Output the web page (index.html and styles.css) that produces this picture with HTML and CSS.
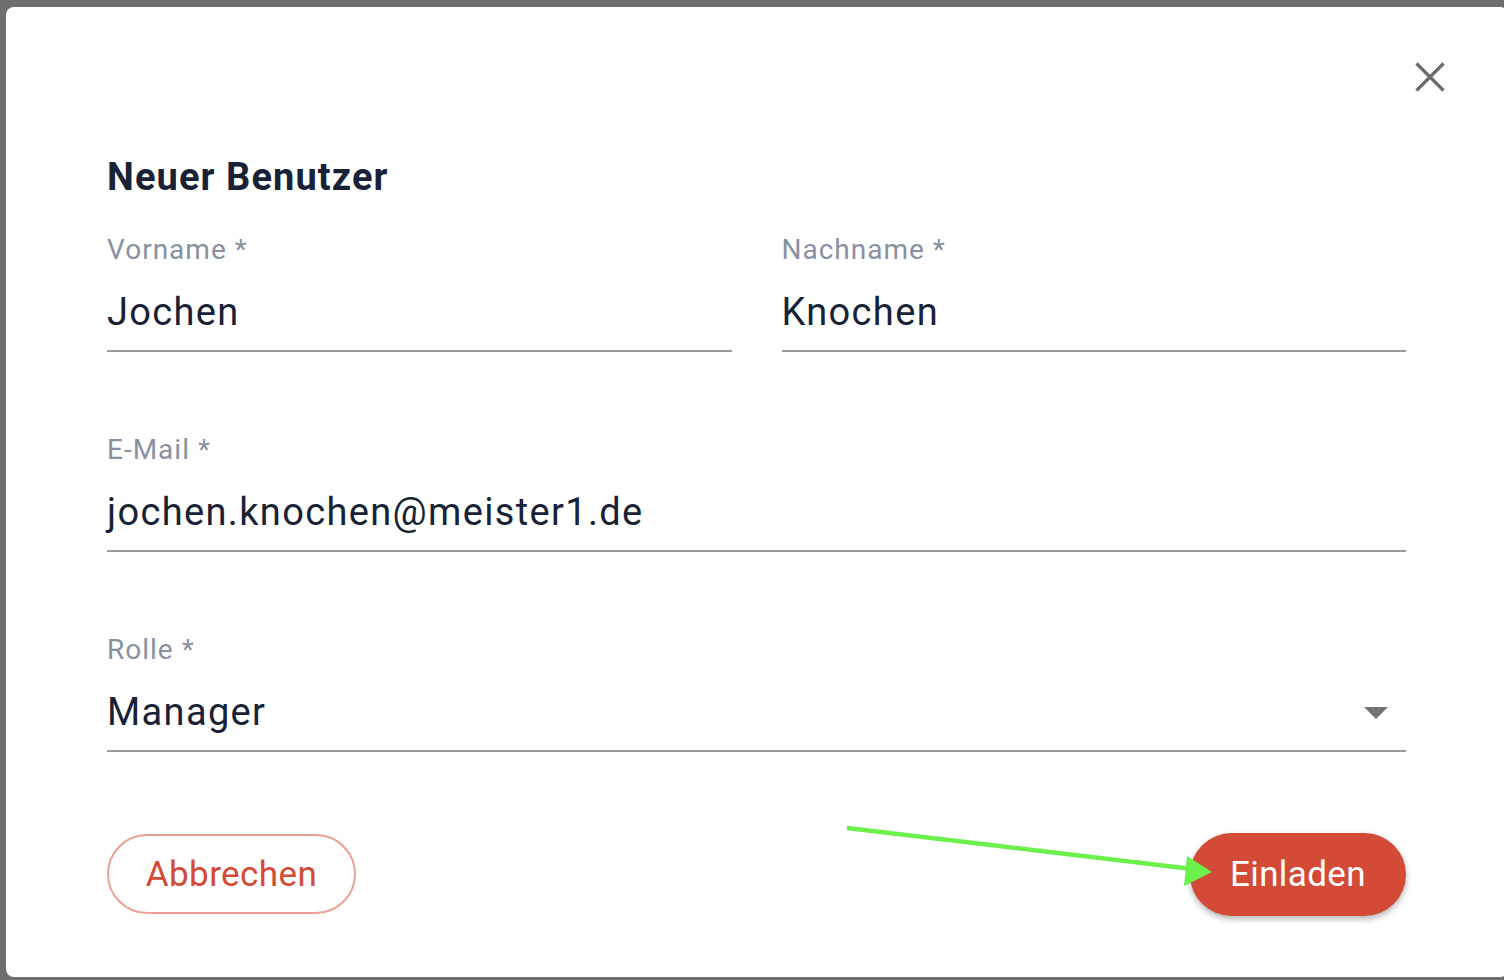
FILE: index.html
```html
<!DOCTYPE html>
<html lang="de">
<head>
<meta charset="utf-8">
<title>Neuer Benutzer</title>
<link rel="stylesheet" href="styles.css">
</head>
<body>
<div class="dialog">
  <div class="top">
    <button class="close" aria-label="Schließen">
      <svg width="30" height="30" viewBox="0 0 30 30"><path d="M1.5 1.5 L28.5 28.5 M28.5 1.5 L1.5 28.5" stroke="#6b6b6b" stroke-width="3.2" fill="none"/></svg>
    </button>
  </div>
  <h1 class="title">Neuer Benutzer</h1>
  <div class="form">
    <div class="row two">
      <div class="field">
        <div class="label">Vorname *</div>
        <div class="value">Jochen</div>
      </div>
      <div class="field">
        <div class="label">Nachname *</div>
        <div class="value">Knochen</div>
      </div>
    </div>
    <div class="row">
      <div class="field">
        <div class="label">E-Mail *</div>
        <div class="value">jochen.knochen@meister1.de</div>
      </div>
    </div>
    <div class="row">
      <div class="field">
        <div class="label">Rolle *</div>
        <div class="value select"><span>Manager</span><span class="caret"></span></div>
      </div>
    </div>
  </div>
  <div class="actions">
    <button class="btn outline">Abbrechen</button>
    <button class="btn primary">Einladen</button>
  </div>
</div>
<svg class="arrow" width="1504" height="980" viewBox="0 0 1504 980">
  <line x1="847" y1="828" x2="1192" y2="869" stroke="#6cf04c" stroke-width="4.5"/>
  <polygon points="1187,856 1212,872 1184,886" fill="#6cf04c"/>
</svg>
</body>
</html>
```
FILE: styles.css
```css
html, body {
  margin: 0;
  padding: 0;
}
body {
  width: 1504px;
  height: 980px;
  overflow: hidden;
  background: #6f6f6f;
  position: relative;
  font-family: Roboto, "Noto Sans", sans-serif;
}
.dialog {
  box-sizing: border-box;
  margin: 7px 0 0 6px;
  width: 1502px;
  height: 970px;
  background: #fff;
  border-radius: 8px;
  padding: 55px 102px 0 101px;
  display: flex;
  flex-direction: column;
}
.top {
  display: flex;
  justify-content: flex-end;
  height: 30px;
  margin-right: -39px;
}
.close {
  border: 0;
  background: none;
  padding: 0;
  width: 30px;
  height: 30px;
  cursor: pointer;
}
.close svg {
  display: block;
}
.title {
  margin: 61px 0 0 0;
  font-size: 38px;
  line-height: 48px;
  font-weight: 700;
  letter-spacing: 1.1px;
  color: #182236;
}
.form {
  margin-top: 33px;
  display: flex;
  flex-direction: column;
  gap: 82px;
}
.row {
  display: grid;
  grid-template-columns: 1fr;
}
.row.two {
  grid-template-columns: 1fr 1fr;
  column-gap: 50px;
}
.field {
  border-bottom: 2px solid #9a9a9a;
  padding-bottom: 14px;
}
.label {
  font-size: 28px;
  line-height: 32px;
  letter-spacing: 1px;
  color: #8891a3;
}
.value {
  margin-top: 22px;
  font-size: 38px;
  line-height: 48px;
  letter-spacing: 1.35px;
  color: #182236;
}
.select {
  display: flex;
  align-items: center;
  justify-content: space-between;
}
.caret {
  width: 0;
  height: 0;
  border-left: 12.5px solid transparent;
  border-right: 12.5px solid transparent;
  border-top: 12px solid #737373;
  margin-right: 18px;
  margin-top: 2px;
}
.actions {
  margin-top: 80px;
  height: 84px;
  display: flex;
  align-items: center;
  justify-content: space-between;
}
.btn {
  font-family: Roboto, "Noto Sans", sans-serif;
  font-size: 35px;
  letter-spacing: 0.4px;
  cursor: pointer;
  box-sizing: border-box;
}
.outline {
  width: 249px;
  height: 80px;
  border: 2px solid #e9a193;
  border-radius: 40px;
  background: #fff;
  color: #d34b36;
}
.primary {
  width: 216px;
  height: 83px;
  border: 0;
  border-radius: 42px;
  background: #d34b36;
  color: #fff;
  box-shadow: 0 3px 6px rgba(0, 0, 0, 0.3);
}
.arrow {
  position: absolute;
  left: 0;
  top: 0;
  pointer-events: none;
}
```
